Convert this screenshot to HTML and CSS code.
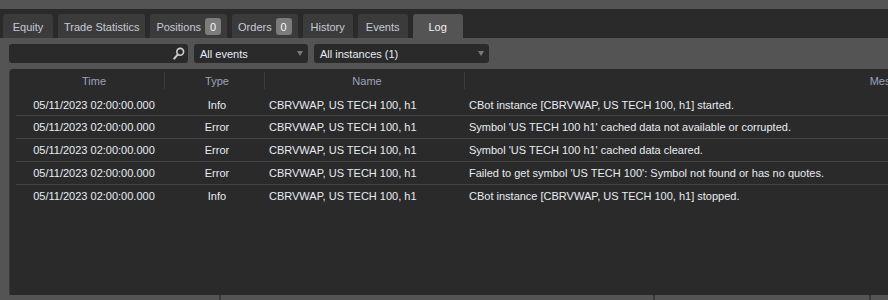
FILE: index.html
```html
<!DOCTYPE html>
<html lang="en">
<head>
<meta charset="utf-8"/>
<meta content="width=device-width, initial-scale=1.0" name="viewport"/>
<title>Log</title>
<link rel="stylesheet" href="styles.css">
</head>
<body>
<div class="topbar"></div>
<div class="tabs">
  <div class="tab">Equity</div>
  <div class="tab">Trade Statistics</div>
  <div class="tab">Positions <span class="badge">0</span></div>
  <div class="tab">Orders <span class="badge">0</span></div>
  <div class="tab">History</div>
  <div class="tab">Events</div>
  <div class="tab active">Log</div>
</div>
<div class="filters">
  <div class="search">
    <svg width="12" height="13" viewBox="0 0 12 13">
      <circle cx="7.2" cy="4.8" r="3.4" fill="none" stroke="#cfcfcf" stroke-width="1.6"/>
      <line x1="4.8" y1="7.4" x2="1.2" y2="11.6" stroke="#cfcfcf" stroke-width="2" stroke-linecap="round"/>
    </svg>
  </div>
  <div class="select select-events"><span>All events</span><i class="arrow"></i></div>
  <div class="select select-instances"><span>All instances (1)</span><i class="arrow"></i></div>
</div>
<div class="grid-wrap">
  <table class="grid">
    <colgroup>
      <col class="c-time"><col class="c-type"><col class="c-name"><col class="c-msg">
    </colgroup>
    <thead>
      <tr>
        <th class="time">Time</th>
        <th class="type">Type</th>
        <th class="name">Name</th>
        <th class="msg">Message</th>
      </tr>
    </thead>
    <tbody>
      <tr><td class="time">05/11/2023 02:00:00.000</td><td class="type">Info</td><td>CBRVWAP, US TECH 100, h1</td><td>CBot instance [CBRVWAP, US TECH 100, h1] started.</td></tr>
      <tr><td class="time">05/11/2023 02:00:00.000</td><td class="type">Error</td><td>CBRVWAP, US TECH 100, h1</td><td>Symbol 'US TECH 100 h1' cached data not available or corrupted.</td></tr>
      <tr><td class="time">05/11/2023 02:00:00.000</td><td class="type">Error</td><td>CBRVWAP, US TECH 100, h1</td><td>Symbol 'US TECH 100 h1' cached data cleared.</td></tr>
      <tr><td class="time">05/11/2023 02:00:00.000</td><td class="type">Error</td><td>CBRVWAP, US TECH 100, h1</td><td>Failed to get symbol 'US TECH 100': Symbol not found or has no quotes.</td></tr>
      <tr><td class="time">05/11/2023 02:00:00.000</td><td class="type">Info</td><td>CBRVWAP, US TECH 100, h1</td><td>CBot instance [CBRVWAP, US TECH 100, h1] stopped.</td></tr>
    </tbody>
  </table>
</div>
<div class="footer">
  <div class="f-cell f1"></div>
  <div class="f-cell f2"></div>
  <div class="f-cell f3"></div>
  <div class="f-cell f4"></div>
</div>
</body>
</html>
```
FILE: styles.css
```css
* {
  margin: 0;
  padding: 0;
  box-sizing: border-box;
}
body {
  font-family: 'Liberation Sans', Arial, sans-serif;
  font-size: 11px;
  background: #545454;
  width: 888px;
  height: 300px;
  overflow: hidden;
}
.topbar {
  height: 9px;
  background: #545454;
}
.tabs {
  height: 29px;
  background: #2a2a2a;
  padding: 5px 3px 0;
  display: flex;
  gap: 5px;
  align-items: flex-end;
}
.tab {
  height: 24px;
  min-width: 50px;
  padding: 1px 6px 0;
  background: #3b3b3b;
  color: #c6cbd6;
  border-radius: 3px 3px 0 0;
  display: flex;
  align-items: center;
  justify-content: center;
  gap: 4px;
}
.tab.active {
  background: #545454;
  color: #f2f2f2;
}
.badge {
  width: 16px;
  height: 17px;
  border-radius: 3px;
  background: #7c7c7c;
  color: #f4f4f4;
  display: flex;
  align-items: center;
  justify-content: center;
}
.filters {
  height: 31px;
  padding: 6px 9px;
  display: flex;
  gap: 6px;
}
.search, .select {
  height: 19px;
  background: #2a2a2a;
  border-radius: 3px;
  display: flex;
  align-items: center;
}
.search {
  width: 179px;
  justify-content: flex-end;
  padding-right: 3px;
}
.select {
  justify-content: space-between;
  padding: 0 5px 0 6px;
  color: #e6ebf5;
}
.select-events { width: 114px; }
.select-instances { width: 175px; }
.arrow {
  width: 0;
  height: 0;
  border-left: 3px solid transparent;
  border-right: 3px solid transparent;
  border-top: 5px solid #7a7a7a;
}
.grid-wrap {
  margin-left: 9px;
  height: 226px;
  background: #2a2a2a;
  border-radius: 4px 0 0 0;
  border-left: 1px solid #3a3a3a;
  padding-left: 6px;
  overflow: hidden;
}
.grid {
  table-layout: fixed;
  width: 1299px;
  border-collapse: collapse;
  color: #e8ecf3;
}
.c-time { width: 149px; }
.c-type { width: 100px; }
.c-name { width: 200px; }
.c-msg { width: 850px; }
th {
  height: 23px;
  font-weight: normal;
  color: #9ba4bd;
  text-align: center;
  padding-left: 4px;
  background: linear-gradient(#3d3d3d, #3d3d3d) right center / 1px 17px no-repeat;
}
th.msg { background: none; }
td {
  height: 23px;
  padding-left: 4px;
  white-space: nowrap;
  overflow: hidden;
}
tbody tr:first-child td { padding-top: 3px; }
th.time, td.time { padding-left: 7px; text-align: center; }
td.type { text-align: center; }
tbody tr:not(:last-child) td {
  border-bottom: 1px solid #444444;
}
.footer {
  height: 5px;
  display: flex;
}
.f-cell { border-right: 2px solid #3a3a3a; }
.f1 { width: 221px; }
.f2 { width: 434px; }
.f3 { width: 216px; }
.f4 { flex: 1; border-right: none; }
```
